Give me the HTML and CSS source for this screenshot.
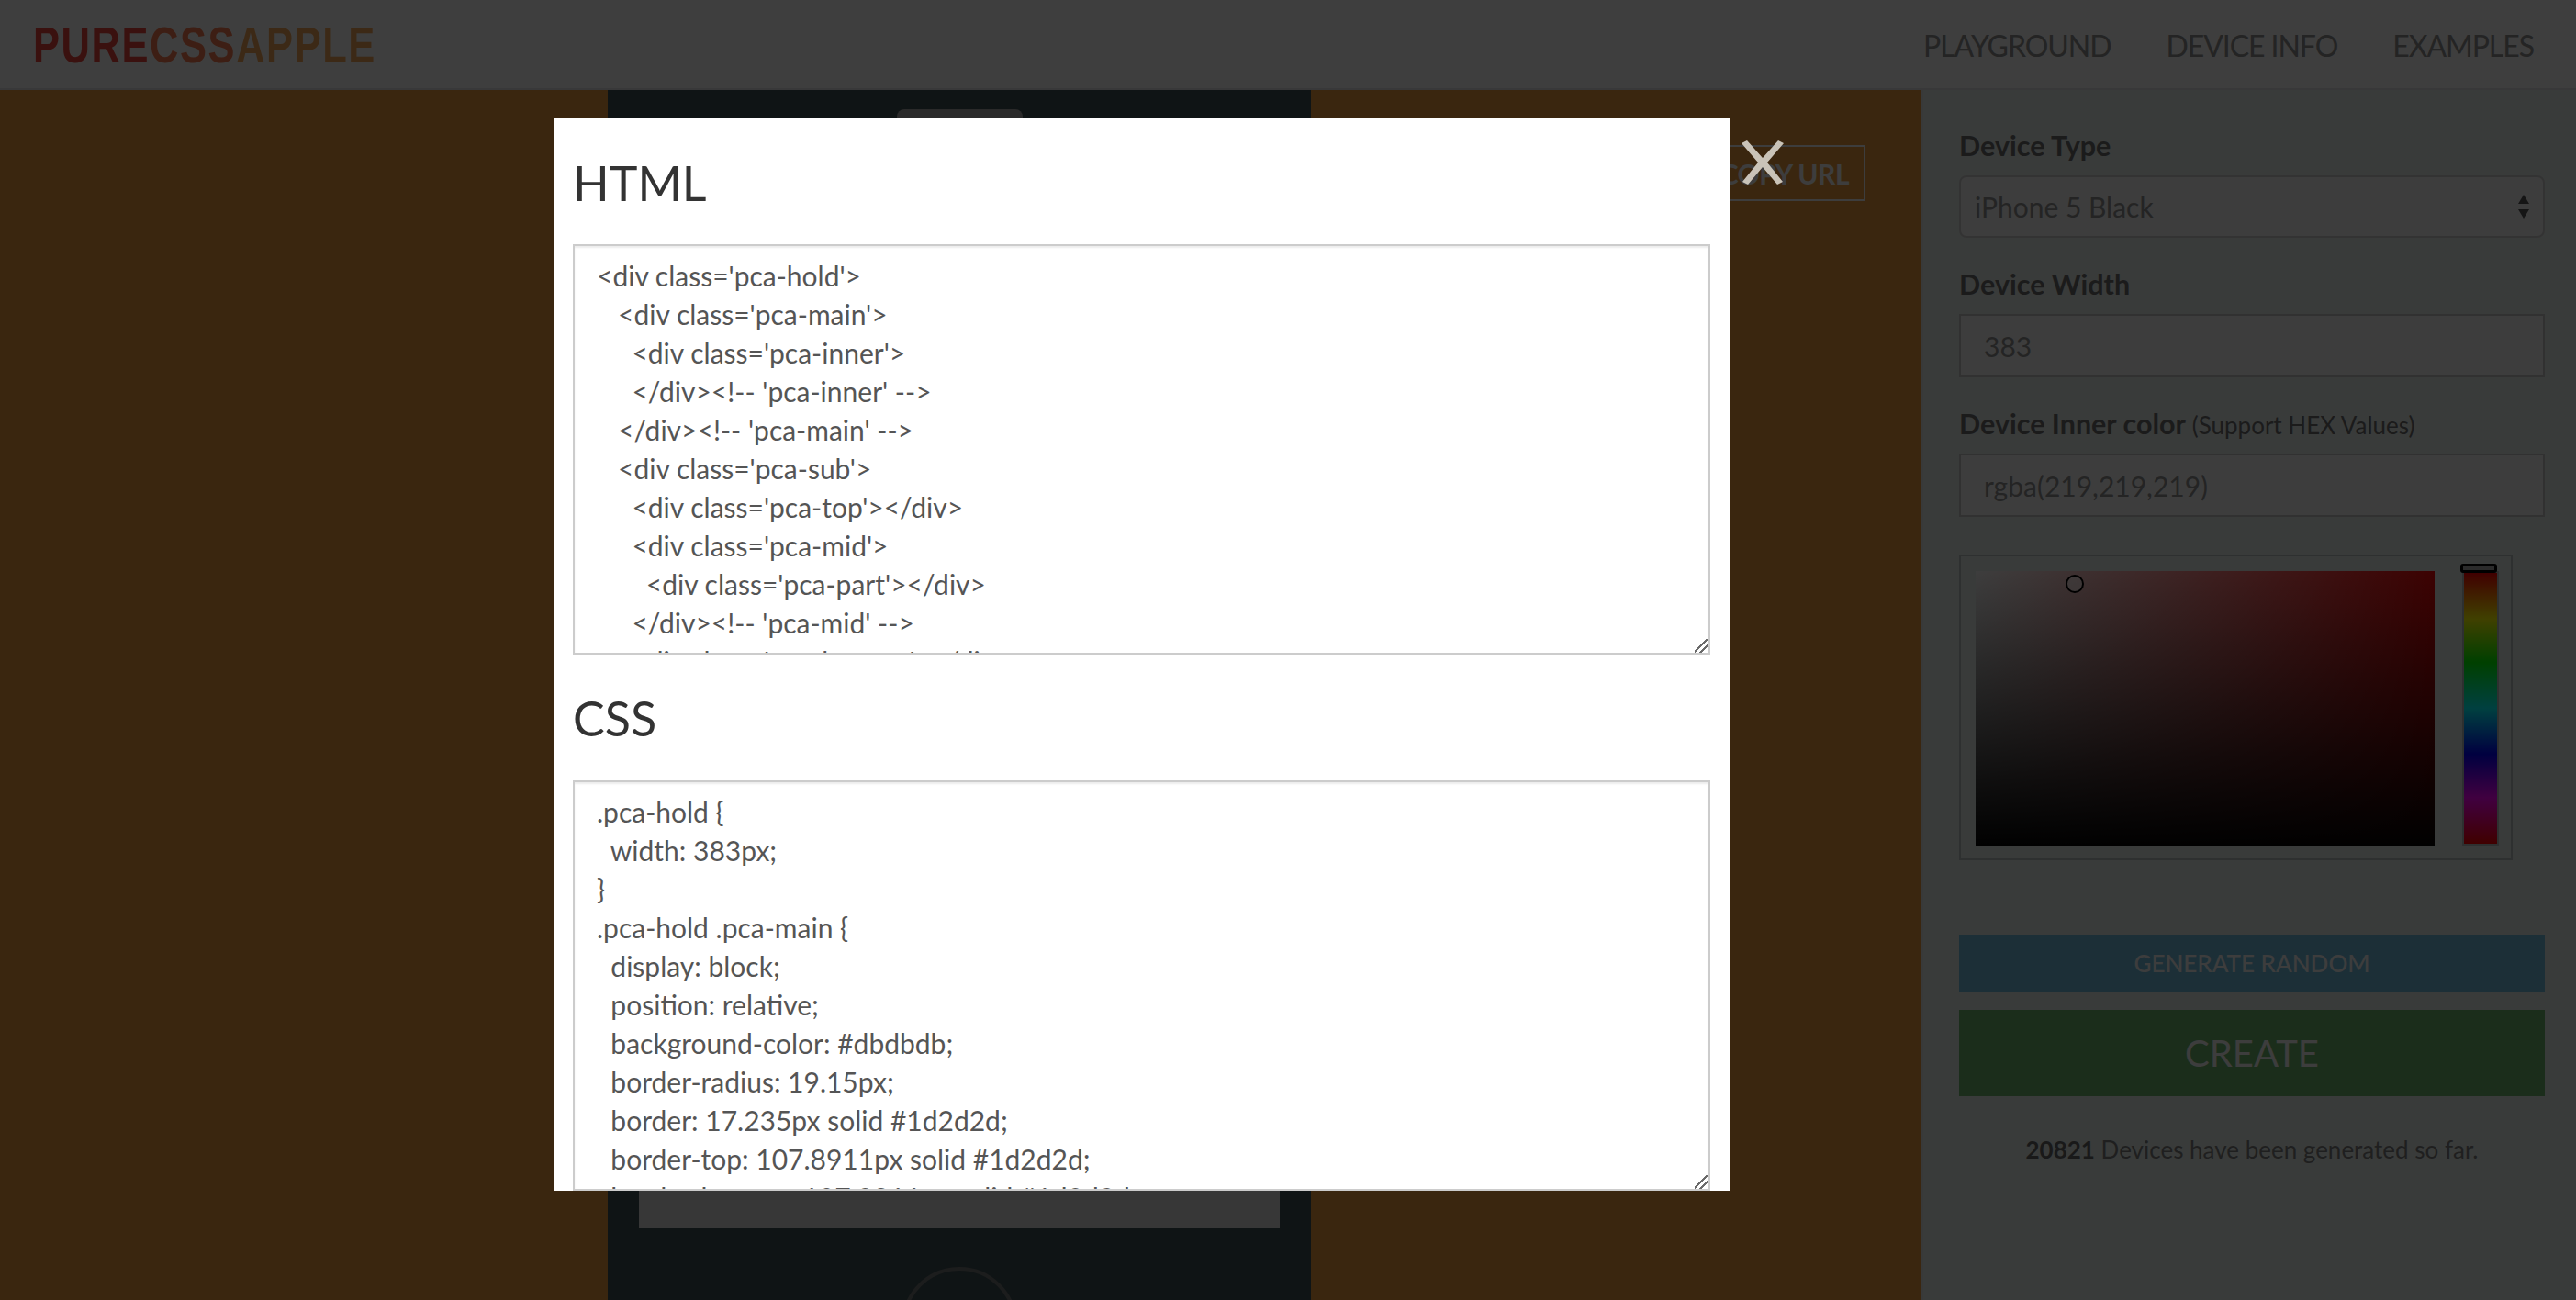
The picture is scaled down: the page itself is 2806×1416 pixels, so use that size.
FILE: index.html
```html
<!DOCTYPE html>
<html lang="en">
<head>
<meta charset="utf-8">
<title>PureCSSApple</title>
<link rel="stylesheet" href="styles.css">
</head>
<body>
<header class="topbar">
  <div class="logo"><span class="logo-a">PURE</span><span class="logo-b">CSS</span><span class="logo-c">APPLE</span></div>
  <nav class="nav">
    <a class="nav-link">PLAYGROUND</a>
    <a class="nav-link">DEVICE INFO</a>
    <a class="nav-link">EXAMPLES</a>
  </nav>
</header>
<main class="content">
  <section class="stage">
    <div class="phone">
      <div class="speaker"></div>
      <div class="screen"></div>
      <div class="home"></div>
    </div>
    <button class="copy-url">COPY URL</button>
  </section>
  <aside class="sidebar">
    <label class="label">Device Type</label>
    <div class="select">
      <span>iPhone 5 Black</span>
      <svg class="select-arrows" width="14" height="26" viewBox="0 0 14 26"><path d="M7 0L13 10H1Z"/><path d="M7 26L13 16H1Z"/></svg>
    </div>
    <label class="label label-next">Device Width</label>
    <input class="field" value="383">
    <label class="label label-next">Device Inner color <small class="label-note">(Support HEX Values)</small></label>
    <input class="field" value="rgba(219,219,219)">
    <div class="picker">
      <div class="sv"><span class="sv-dot"></span></div>
      <div class="hue"><span class="hue-thumb"></span></div>
    </div>
    <button class="btn btn-random">GENERATE RANDOM</button>
    <button class="btn btn-create">CREATE</button>
    <p class="count"><strong>20821</strong> Devices have been generated so far.</p>
  </aside>
</main>
<div class="overlay"></div>
<section class="modal">
  <h3 class="modal-title">HTML</h3>
  <textarea class="code" spellcheck="false">&lt;div class='pca-hold'&gt;
   &lt;div class='pca-main'&gt;
     &lt;div class='pca-inner'&gt;
     &lt;/div&gt;&lt;!-- 'pca-inner' --&gt;
   &lt;/div&gt;&lt;!-- 'pca-main' --&gt;
   &lt;div class='pca-sub'&gt;
     &lt;div class='pca-top'&gt;&lt;/div&gt;
     &lt;div class='pca-mid'&gt;
       &lt;div class='pca-part'&gt;&lt;/div&gt;
     &lt;/div&gt;&lt;!-- 'pca-mid' --&gt;
     &lt;div class='pca-bottom'&gt;&lt;/div&gt;
   &lt;/div&gt;&lt;!-- 'pca-sub' --&gt;
&lt;/div&gt;&lt;!-- 'pca-hold' --&gt;</textarea>
  <h3 class="modal-title modal-title-next">CSS</h3>
  <textarea class="code" spellcheck="false">.pca-hold {
  width: 383px;
}
.pca-hold .pca-main {
  display: block;
  position: relative;
  background-color: #dbdbdb;
  border-radius: 19.15px;
  border: 17.235px solid #1d2d2d;
  border-top: 107.8911px solid #1d2d2d;
  border-bottom: 107.8911px solid #1d2d2d;
}</textarea>
</section>
<svg class="close" width="48" height="48" viewBox="0 0 48 48"><path d="M1 3L7 0L24 19L41 0L47 3L29 24L46 45L40 48L24 29L8 48L2 45L19 24Z"/></svg>
</body>
</html>
```
FILE: styles.css
```css
* { box-sizing: border-box; }
html, body { margin: 0; height: 100%; overflow: hidden; }
body {
  font-family: Lato, "Open Sans", sans-serif;
  color: #888;
  background: #e8983f;
  display: flex;
  flex-direction: column;
  height: 1416px;
}
.topbar {
  height: 98px;
  flex: none;
  background: #f6f6f6;
  border-bottom: 2px solid #dfdfe2;
  display: flex;
  align-items: center;
  justify-content: space-between;
  padding: 2px 46px 0 36px;
}
.logo {
  font-family: "Liberation Sans", sans-serif;
  font-weight: 700;
  font-size: 55px;
  letter-spacing: 2px;
  line-height: 1;
  transform: scaleX(.79);
  transform-origin: left center;
}
.logo-a { color: #e8463c; }
.logo-b { color: #f47a50; }
.logo-c { color: #f0a45a; }
.nav { display: flex; gap: 60px; }
.nav-link { font-size: 32px; letter-spacing: -1.05px; color: #8e8e8e; }
.content { flex: 1; display: flex; min-height: 0; }
.stage {
  position: relative;
  flex: 1;
  display: flex;
  justify-content: center;
  padding-right: 3px;
  overflow: hidden;
}
.phone {
  width: 766px;
  height: 1500px;
  flex: none;
  background: #3e5054;
  padding-top: 21px;
  display: flex;
  flex-direction: column;
  align-items: center;
}
.speaker {
  width: 137px;
  height: 20px;
  flex: none;
  border-radius: 8px;
  background: #a8a8a8;
}
.screen {
  width: 698px;
  height: 1048px;
  margin-top: 151px;
  background: #dbdbdb;
  flex: none;
}
.home {
  width: 126px;
  height: 126px;
  flex: none;
  margin-top: 42px;
  border-radius: 50%;
  border: 4px solid #707474;
}
.copy-url {
  position: absolute;
  top: 60px;
  right: 61px;
  width: 260px;
  height: 61px;
  padding: 0 16px 0 0;
  text-align: right;
  font: 700 30px Lato, sans-serif;
  letter-spacing: -.5px;
  color: #f4f4f4;
  background: transparent;
  border: 2px solid #f4f4f4;
}
.sidebar {
  width: 713px;
  flex: none;
  background: #e4ece8;
  border-left: 2px solid #dfe4e2;
  padding: 43px 34px 0 39px;
  display: flex;
  flex-direction: column;
}
.label {
  font-size: 30.5px;
  font-weight: 700;
  line-height: 34px;
  height: 34px;
  color: #6e6e6e;
  margin-bottom: 16px;
  flex: none;
}
.label-next { margin-top: 33px; }
.label-note { font-size: 26px; font-weight: 400; line-height: 1; }
.select {
  height: 68px;
  border: 2px solid #ccc;
  border-radius: 8px;
  background: #f2f2f2;
  display: flex;
  align-items: center;
  justify-content: space-between;
  padding: 0 14px 0 15px;
  font-size: 30px;
  color: #909090;
  flex: none;
}
.select-arrows { fill: #555; }
.field {
  height: 69px;
  width: 100%;
  border: 2px solid #c4c4c4;
  background: #f4f4f4;
  padding: 0 25px;
  font: 30px Lato, sans-serif;
  color: #909090;
  flex: none;
}
.picker {
  position: relative;
  width: 603px;
  height: 333px;
  margin-top: 41px;
  border: 2px solid #b8c0be;
  display: flex;
  padding: 16px 0 0 16px;
  gap: 30px;
  flex: none;
}
.sv {
  position: relative;
  width: 500px;
  height: 300px;
  flex: none;
  background: linear-gradient(to bottom, transparent, #050505), linear-gradient(to right, #f4f4f4, #f00a0a);
}
.sv-dot {
  position: absolute;
  left: 98px;
  top: 4px;
  width: 20px;
  height: 20px;
  border-radius: 50%;
  border: 2px solid #000;
  background: rgba(255,255,255,.5);
}
.hue {
  position: relative;
  width: 40px;
  height: 299px;
  flex: none;
  border: 2px solid #b8c0be;
  background: linear-gradient(to bottom, #f00, #ff0 17%, #0f0 33%, #0ff 50%, #00f 67%, #f0f 83%, #f00);
}
.hue-thumb {
  position: absolute;
  left: -4px;
  top: -10px;
  width: 40px;
  height: 10px;
  border-radius: 3px;
  background: #aaa;
  border: 3px solid #000;
}
.btn {
  width: 100%;
  border: 0;
  font-family: Lato, sans-serif;
  color: #f4f4f4;
  flex: none;
}
.btn-random {
  height: 62px;
  margin-top: 81px;
  background: #70bcdc;
  font-size: 26px;
  font-weight: 500;
}
.btn-create {
  height: 94px;
  margin-top: 20px;
  background: #6cb46c;
  font-size: 40px;
}
.count {
  margin: 42px 0 0;
  text-align: center;
  font-size: 26px;
  line-height: 32px;
  color: #7e7e7e;
}
.count strong { color: #666; }
.overlay {
  position: fixed;
  inset: 0;
  background: rgba(0,0,0,.75);
}
.modal {
  position: fixed;
  left: 604px;
  top: 128px;
  width: 1280px;
  height: 1169px;
  background: #fff;
  padding: 0 20px;
  overflow: hidden;
}
.modal-title {
  margin: 0;
  padding-top: 38px;
  height: 138px;
  font-size: 52px;
  line-height: 66px;
  font-weight: 400;
  color: #333;
}
.modal-title-next { padding-top: 36px; height: 137px; }
.code {
  display: block;
  width: 1239px;
  height: 447px;
  padding: 11px 24px 0;
  margin: 0;
  border: 2px solid #ccc;
  box-shadow: inset 0 2px 2px rgba(0,0,0,.075);
  font: 30px/42px Lato, sans-serif;
  color: #555;
  background: #fff;
  overflow: hidden;
  outline: 0;
  white-space: pre;
}
.code::-webkit-resizer {
  background: linear-gradient(135deg, transparent 42%, #6a6a6a 42%, #6a6a6a 51%, transparent 51%, transparent 65%, #6a6a6a 65%, #6a6a6a 74%, transparent 74%);
}
.close {
  position: fixed;
  left: 1896px;
  top: 153px;
  fill: #c9c3b8;
}
```
